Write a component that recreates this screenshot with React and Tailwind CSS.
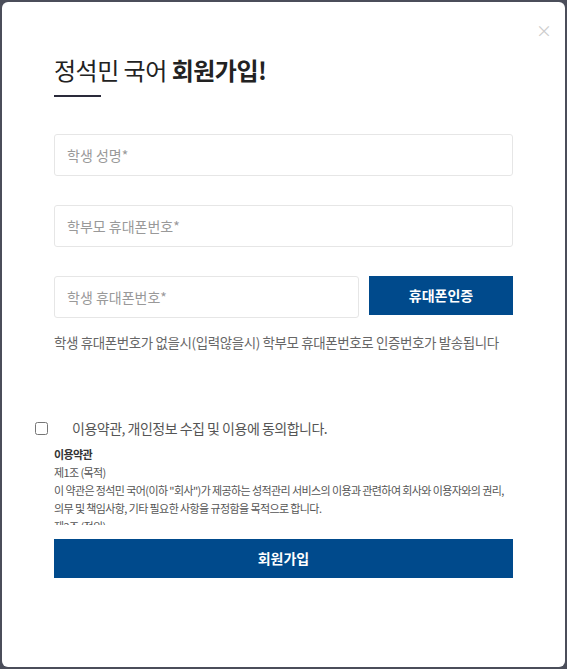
import React from 'react';

const font = { fontFamily: '"Noto Sans CJK KR", "Noto Sans", sans-serif' };

export default function App() {
  return (
    <div className="w-[567px] h-[669px] bg-[#4b4e5a] p-[2px] overflow-hidden" style={font}>
      <div className="relative w-full h-full bg-white rounded-[6px] overflow-hidden">
        {/* close */}
        <button className="absolute right-[13px] top-[20px] text-[#cccccc] text-[16px] leading-none">×</button>

        <div className="pl-[52px] pr-[52px] pt-[53px]">
          <h2 className="text-[24px] leading-[30px] text-[#222] tracking-[-0.5px]">
            정석민 국어 <span className="font-bold">회원가입!</span>
          </h2>
          <div className="mt-[10px] w-[47px] h-[2px] bg-[#2a2a3a]" />

          <div className="mt-[37px] flex flex-col gap-[29px]">
            <input
              className="h-[42px] w-full border border-[#e6e6e6] rounded-[3px] px-[12px] text-[14px] placeholder:text-[#999] outline-none"
              placeholder="학생 성명*"
            />
            <input
              className="h-[42px] w-full border border-[#e6e6e6] rounded-[3px] px-[12px] text-[14px] placeholder:text-[#999] outline-none"
              placeholder="학부모 휴대폰번호*"
            />
            <div className="flex gap-[10px] items-start">
              <input
                className="h-[42px] flex-1 border border-[#e6e6e6] rounded-[3px] px-[12px] text-[14px] placeholder:text-[#999] outline-none"
                placeholder="학생 휴대폰번호*"
              />
              <button className="h-[39px] w-[144px] bg-[#004a8c] text-white text-[14px] font-bold">
                휴대폰인증
              </button>
            </div>
          </div>

          <p className="mt-[14px] text-[13.5px] text-[#666] tracking-[-0.4px] whitespace-nowrap">
            학생 휴대폰번호가 없을시(입력않을시) 학부모 휴대폰번호로 인증번호가 발송됩니다
          </p>
        </div>

        <label className="mt-[66px] pl-[33px] flex items-center">
          <input type="checkbox" className="w-[13px] h-[13px] accent-[#999]" />
          <span className="ml-[24px] text-[14px] text-[#555] tracking-[-0.5px]">이용약관, 개인정보 수집 및 이용에 동의합니다.</span>
        </label>

        <div className="mt-[6px] ml-[52px] mr-[50px] h-[80px] overflow-hidden text-[11px] leading-[18px] text-[#555] tracking-[-0.6px]">
          <div className="font-bold text-[#333]">이용약관</div>
          <div>제1조 (목적)</div>
          <div>
            이 약관은 정석민 국어(이하 "회사")가 제공하는 성적관리 서비스의 이용과 관련하여 회사와 이용자와의 권리,
            <br />
            의무 및 책임사항, 기타 필요한 사항을 규정함을 목적으로 합니다.
          </div>
          <div>제2조 (정의)</div>
        </div>

        <div className="mt-[14px] px-[52px]">
          <button className="w-full h-[39px] bg-[#004a8c] text-white text-[14px] font-bold">회원가입</button>
        </div>
      </div>
    </div>
  );
}
